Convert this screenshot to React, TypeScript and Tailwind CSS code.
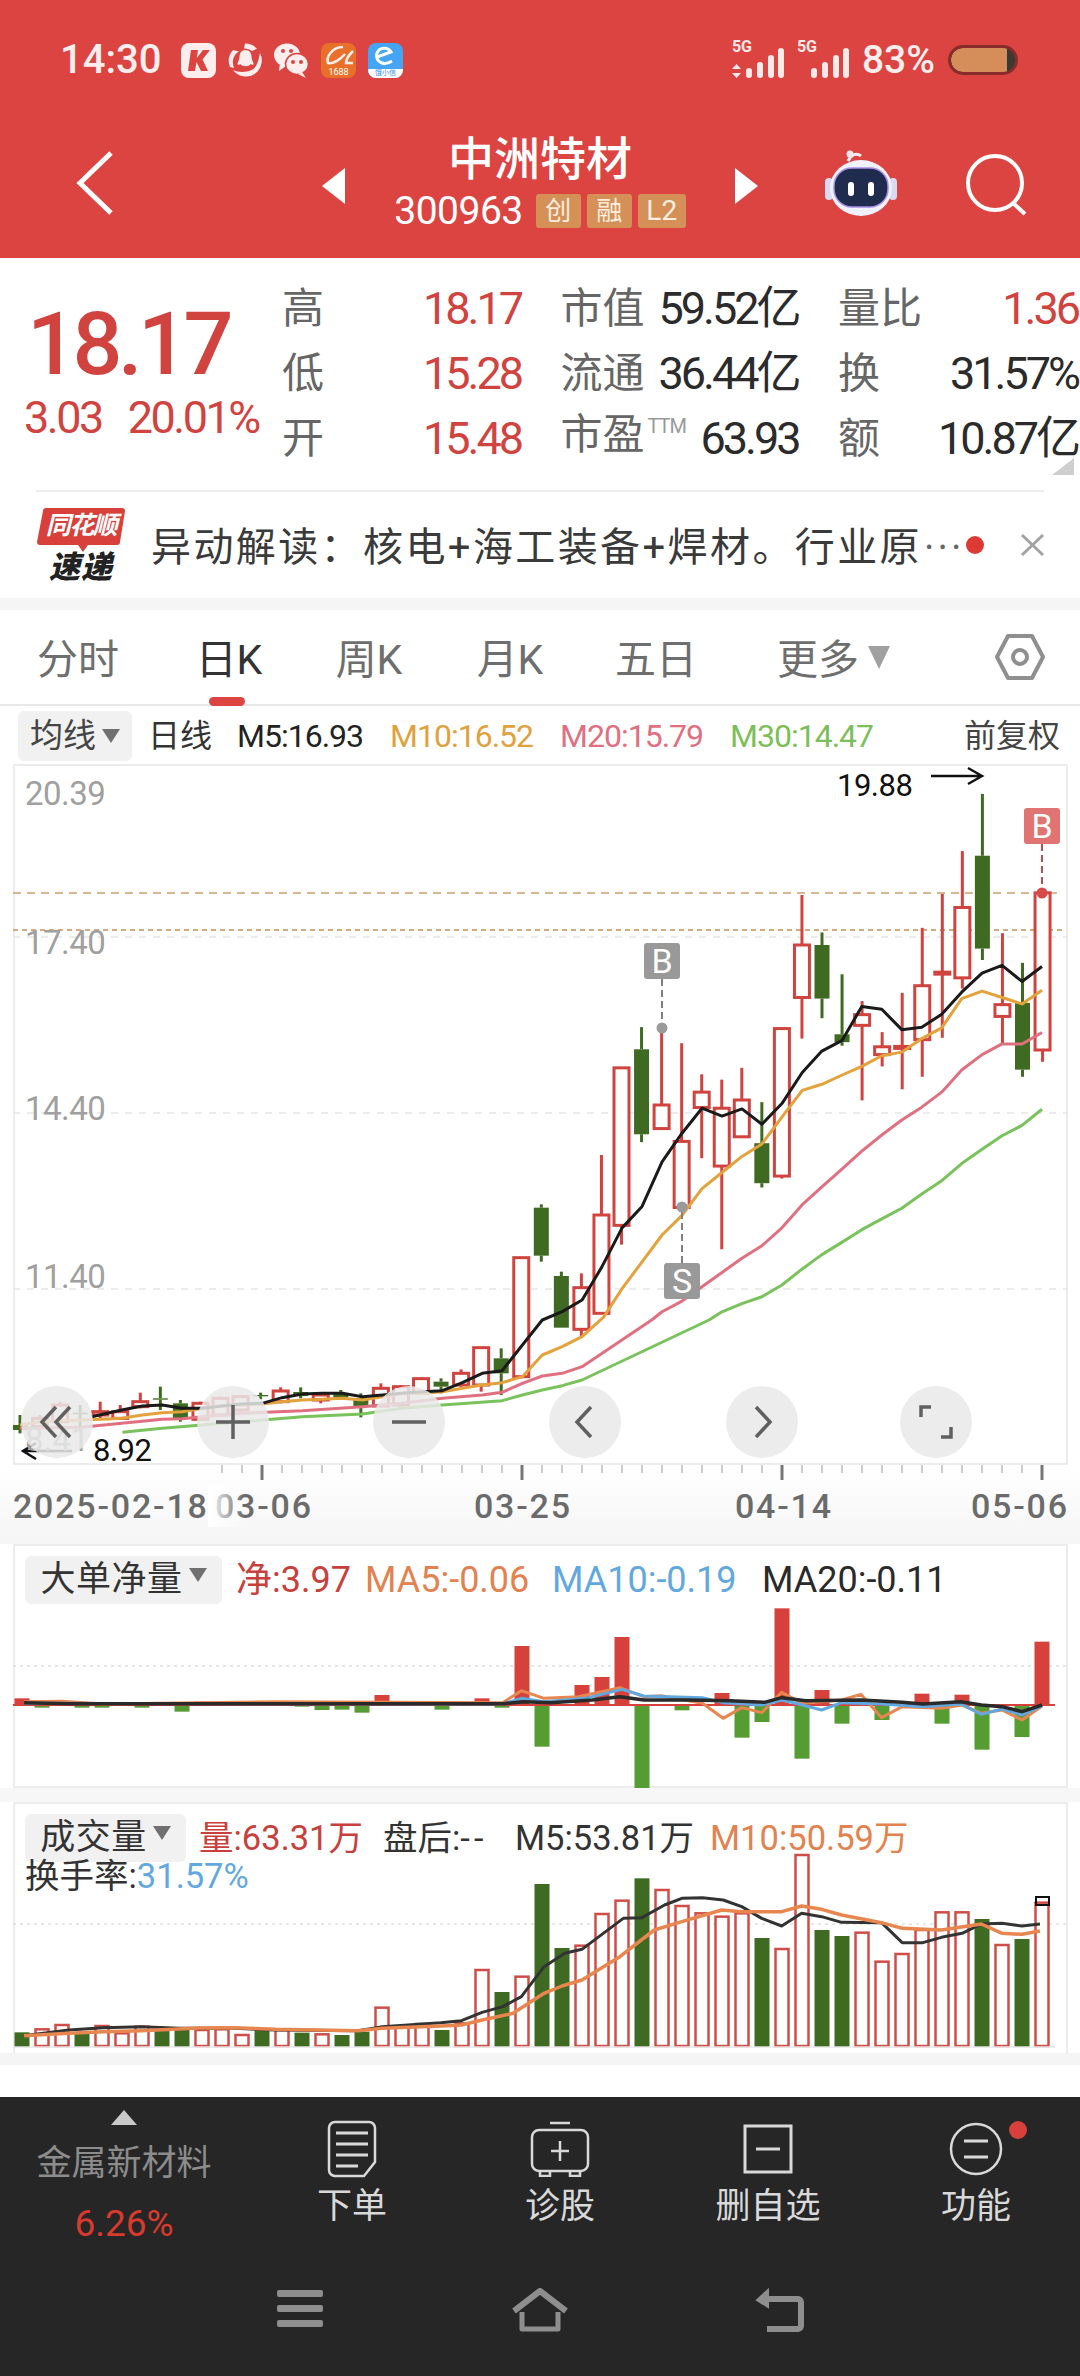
import React from "react";

const RED = "#d0433f";
const GREEN = "#3f6a22";
const z4y = (y: number) => 1100 + y / 3;
const z3y = (y: number) => 760 + y / 2.8;
const z4x = (x: number) => x / 2.613;
const z3x = (x: number) => 500 + x / 2.703;
type C = [number, number, number, number, "r" | "g"];
const c4: C[] = [
  [975, 990, 945, 1000, "g"], [955, 980, 945, 985, "r"], [915, 965, 905, 970, "r"], [938, 943, 915, 985, "g"],
  [935, 945, 905, 960, "r"], [935, 955, 915, 960, "r"], [905, 920, 878, 925, "r"], [895, 899, 860, 930, "g"],
  [910, 955, 900, 965, "g"], [910, 958, 905, 962, "r"], [895, 945, 890, 950, "r"], [890, 930, 885, 935, "r"],
  [885, 889, 878, 898, "g"], [873, 905, 862, 910, "r"], [876, 888, 862, 895, "g"], [885, 900, 880, 910, "r"],
  [880, 893, 870, 897, "g"], [895, 918, 880, 952, "g"], [865, 918, 850, 922, "r"], [860, 915, 855, 920, "r"],
  [836, 880, 832, 884, "r"], [845, 860, 835, 880, "g"], [820, 855, 808, 860, "r"], [743, 855, 743, 875, "r"],
  [775, 820, 745, 885, "g"], [473, 830, 473, 835, "r"], [323, 467, 313, 485, "g"], [528, 683, 515, 683, "g"],
  [563, 688, 520, 712, "r"], [345, 640, 165, 640, "r"],
];
const c3: C[] = [
  [862, 1303, 862, 1357, "r"], [810, 1048, 748, 1070, "g"], [966, 1032, 750, 1032, "r"], [1068, 1253, 793, 1253, "r"],
  [930, 973, 880, 1115, "r"], [975, 1137, 895, 1370, "r"], [952, 1055, 862, 1055, "r"], [1073, 1185, 958, 1197, "g"],
  [752, 1165, 752, 1172, "r"], [518, 665, 378, 780, "r"], [518, 668, 483, 723, "g"], [768, 790, 600, 800, "g"],
  [713, 743, 675, 953, "r"], [803, 825, 762, 858, "r"], [802, 806, 652, 922, "r"], [632, 783, 470, 887, "r"],
  [594, 597, 375, 778, "r"], [413, 610, 255, 640, "r"], [268, 528, 95, 560, "g"], [685, 718, 485, 795, "r"],
  [680, 867, 568, 887, "g"], [372, 812, 360, 845, "r"],
];
const candles = [
  ...c4.map(([a, b, c, d, k]) => [z4y(a), z4y(b), z4y(c), z4y(d), k] as const),
  ...c3.map(([a, b, c, d, k]) => [z3y(a), z3y(b), z3y(c), z3y(d), k] as const),
];
const pts = (a: number[][], b: number[][]) =>
  [...a.map(([x, y]) => `${z4x(x)},${z4y(y)}`), ...b.map(([x, y]) => `${z3x(x)},${z3y(y)}`)].join(" ");
const m5 = pts(
  [[240, 950], [318, 930], [372, 918], [424, 915], [476, 925], [528, 925], [580, 918], [632, 912], [685, 910], [737, 893], [790, 882], [842, 880], [895, 880], [947, 890], [999, 885], [1051, 880], [1103, 875], [1156, 872], [1208, 848], [1260, 820], [1312, 812], [1365, 735], [1417, 660], [1469, 635], [1521, 600]],
  [[275, 1420], [330, 1310], [384, 1250], [438, 1125], [492, 1045], [546, 975], [600, 997], [654, 977], [708, 1020], [762, 962], [817, 875], [870, 815], [925, 785], [978, 690], [1032, 698], [1086, 755], [1140, 748], [1194, 712], [1248, 650], [1303, 597], [1357, 575], [1411, 620], [1465, 578]]
);
const m10 = pts(
  [[52, 975], [104, 965], [213, 960], [265, 958], [318, 955], [372, 945], [424, 938], [476, 935], [528, 925], [580, 918], [632, 915], [685, 912], [737, 905], [790, 900], [842, 898], [895, 895], [947, 900], [999, 890], [1051, 880], [1103, 880], [1156, 875], [1208, 865], [1260, 855], [1312, 848], [1365, 830], [1417, 765], [1469, 740], [1521, 710]],
  [[280, 1560], [330, 1480], [384, 1405], [438, 1330], [492, 1275], [546, 1200], [600, 1155], [654, 1110], [708, 1075], [762, 1000], [817, 925], [870, 908], [925, 882], [978, 858], [1032, 828], [1086, 818], [1140, 780], [1194, 750], [1248, 668], [1303, 647], [1357, 665], [1411, 683], [1465, 645]]
);
const m20 = pts(
  [[52, 985], [213, 982], [318, 970], [424, 958], [476, 956], [528, 950], [632, 940], [790, 932], [947, 920], [1051, 910], [1156, 895], [1260, 885], [1312, 877], [1365, 850], [1417, 828], [1469, 820], [1521, 800]],
  [[410, 1568], [438, 1545], [492, 1515], [546, 1475], [600, 1435], [654, 1395], [708, 1360], [762, 1310], [817, 1245], [870, 1195], [925, 1145], [978, 1095], [1032, 1050], [1086, 1008], [1140, 972], [1194, 930], [1248, 868], [1303, 825], [1357, 795], [1411, 795], [1465, 763]]
);
const m30 = pts(
  [[320, 997], [424, 985], [528, 975], [632, 965], [790, 950], [947, 942], [1051, 925], [1156, 915], [1312, 902], [1365, 885], [1417, 870], [1469, 857], [1521, 840]],
  [[565, 1568], [600, 1545], [654, 1522], [708, 1503], [762, 1470], [817, 1425], [870, 1385], [925, 1350], [978, 1315], [1032, 1285], [1086, 1255], [1140, 1215], [1194, 1178], [1248, 1130], [1303, 1090], [1357, 1052], [1411, 1023], [1465, 978]]
);

const netBars: [number, number][] = [[0, 505], [1, 533], [3, 533], [4, 533], [6, 533], [8, 545], [9, 515], [14, 530], [15, 540], [16, 539], [17, 548], [18, 495], [21, 539], [23, 505], [24, 533], [25, 348], [26, 650], [28, 465], [29, 441], [30, 321], [31, 775], [33, 541], [35, 489], [36, 623], [37, 576], [38, 235], [39, 686], [40, 480], [41, 581], [43, 570], [45, 491], [46, 581], [47, 494], [48, 659], [50, 621], [51, 335]];
const p5 = (a: number[][]) => a.map(([x, y]) => `${x / 1.452},${1530 + y / 3}`).join(" ");
const p6 = (a: number[][]) => a.map(([x, y]) => `${x / 1.452},${1800 + y / 3}`).join(" ");
const netBlack = p5([[35, 518], [100, 521], [730, 521], [760, 515], [800, 518], [860, 510], [900, 500], [935, 510], [1000, 510], [1060, 512], [1110, 517], [1135, 503], [1170, 512], [1250, 510], [1310, 517], [1340, 522], [1395, 515], [1425, 525], [1455, 530], [1484, 545], [1513, 525]]);
const netOrange = p5([[35, 515], [90, 514], [150, 522], [400, 515], [730, 518], [757, 482], [790, 505], [840, 500], [900, 473], [935, 500], [960, 497], [1020, 520], [1050, 565], [1077, 533], [1106, 548], [1135, 487], [1165, 520], [1222, 510], [1250, 493], [1280, 563], [1310, 530], [1367, 535], [1397, 525], [1425, 550], [1455, 540], [1484, 570], [1513, 528]]);
const netBlue = p5([[35, 520], [730, 522], [757, 505], [790, 515], [850, 505], [903, 478], [935, 498], [1020, 503], [1050, 518], [1106, 525], [1135, 510], [1165, 525], [1193, 540], [1222, 518], [1280, 522], [1340, 530], [1395, 522], [1425, 553], [1455, 537], [1484, 555], [1513, 528]]);

const vols: [number, "r" | "g"][] = [[697, "g"], [688, "r"], [675, "r"], [700, "g"], [678, "r"], [700, "r"], [680, "r"], [690, "g"], [688, "g"], [690, "r"], [688, "r"], [705, "r"], [690, "g"], [690, "r"], [698, "g"], [703, "r"], [705, "g"], [695, "g"], [623, "r"], [680, "r"], [672, "r"], [690, "g"], [670, "r"], [510, "r"], [576, "g"], [530, "r"], [252, "g"], [444, "g"], [437, "r"], [342, "r"], [302, "r"], [235, "g"], [270, "r"], [318, "r"], [340, "r"], [350, "r"], [340, "r"], [414, "g"], [447, "r"], [165, "r"], [390, "g"], [408, "g"], [398, "r"], [485, "r"], [462, "r"], [390, "r"], [337, "r"], [337, "r"], [357, "g"], [435, "r"], [417, "g"], [308, "r"]];
const volBlack = p6([[35, 707], [100, 690], [150, 683], [205, 680], [260, 685], [340, 685], [400, 690], [520, 692], [555, 680], [640, 668], [670, 662], [700, 637], [730, 620], [757, 590], [790, 500], [820, 460], [845, 448], [905, 355], [932, 353], [965, 315], [990, 295], [1020, 293], [1050, 300], [1077, 320], [1106, 355], [1135, 378], [1164, 340], [1193, 350], [1222, 367], [1280, 368], [1310, 428], [1340, 428], [1367, 412], [1397, 400], [1425, 372], [1455, 370], [1484, 378], [1510, 372]]);
const volOrange = p6([[35, 707], [100, 700], [150, 695], [205, 692], [290, 684], [340, 683], [400, 688], [520, 692], [555, 685], [640, 678], [670, 675], [700, 660], [745, 640], [790, 580], [816, 558], [845, 540], [900, 470], [950, 390], [990, 365], [1048, 330], [1077, 335], [1135, 335], [1164, 318], [1193, 328], [1222, 345], [1280, 368], [1310, 385], [1367, 390], [1425, 372], [1455, 400], [1484, 403], [1510, 393]]);

const ticks = Array.from({ length: 42 }, (_, i) => 222 + i * 20);

function Signal({ arrows }: { arrows?: boolean }) {
  return (
    <div className="relative h-[36px] w-[54px]">
      <span className="absolute left-0 top-[-3px] text-[16px] font-bold leading-[16px] text-[#fde9e8]">5G</span>
      {arrows && (
        <svg className="absolute left-0 top-[22px]" width="9" height="14" viewBox="0 0 9 14"><path d="M4.5 0 9 5H0ZM4.5 14 0 9h9Z" fill="#fde9e8" /></svg>
      )}
      {[[14, 10], [25, 16], [36, 23], [46, 30]].map(([x, h]) => (
        <span key={x} className="absolute bottom-0 w-[6px] rounded-full bg-[#fde9e8]" style={{ left: x, height: h }} />
      ))}
    </div>
  );
}

function Dropdown({ label, w }: { label: string; w: string }) {
  return (
    <div className={`flex h-[48px] items-center justify-center gap-[6px] rounded-[6px] bg-[#f1f1f1] text-[35px] tracking-[0.5px] text-[#333] ${w}`}>
      <span>{label}</span>
      <svg width="18" height="14" viewBox="0 0 18 14" className="mt-[-10px]"><path d="M0 0h18L9 14Z" fill="#707070" /></svg>
    </div>
  );
}

function Stat({ label, value, color, sup }: { label: string; value: string; color?: string; sup?: boolean }) {
  return (
    <div className="flex h-[65px] items-center justify-between">
      <span className="text-[42px] leading-[50px] text-[#666] whitespace-nowrap">
        {label}
        {sup && <span className="relative top-[-16px] ml-[3px] text-[20px] tracking-[-1px] text-[#999]">TTM</span>}
      </span>
      <span className="text-[45px] leading-[50px] tracking-[-3px] whitespace-nowrap" style={{ color: color ?? "#2b2b2b" }}>{value}</span>
    </div>
  );
}

function Round({ x, children }: { x: number; children: React.ReactNode }) {
  return (
    <div className="absolute top-[620px] flex h-[72px] w-[72px] items-center justify-center rounded-full bg-[#e9e9e9]/85" style={{ left: x - 36 - 15 }}>
      <svg width="50" height="50" viewBox="0 0 50 50" fill="none" stroke="#606060" strokeWidth="3.5">{children}</svg>
    </div>
  );
}

function Pin({ left, top, bg, t }: { left: number; top: number; bg: string; t: string }) {
  return (
    <div className="absolute flex h-[36px] w-[36px] items-center justify-center rounded-[3px] text-[34px] leading-none text-white" style={{ left: left - 15, top: top - 766, background: bg }}>{t}</div>
  );
}

function TabItem({ t, w, active }: { t: string; w: string; active?: boolean }) {
  return <div className={`text-center text-[41px] leading-[50px] ${w} ${active ? "text-[#333]" : "text-[#6e6e6e]"}`}>{t}</div>;
}

function BottomTab({ label, children }: { label: string; children: React.ReactNode }) {
  return (
    <div className="flex w-[208px] flex-col items-center">
      <div className="flex h-[62px] items-center justify-center">{children}</div>
      <div className="mt-[7px] text-[35px] leading-[40px] text-[#d9d9d9]">{label}</div>
    </div>
  );
}

export default function App() {
  return (
    <div className="relative h-[2376px] w-[1080px] overflow-hidden bg-white [font-family:Roboto,'Noto_Sans_CJK_SC',sans-serif]">
      {/* header */}
      <header className="h-[258px] bg-[#dc4442] text-white">
        <div className="flex h-[120px] items-start justify-between pl-[60px] pr-[62px] pt-[42px]">
          <div className="flex items-center">
            <span className="w-[121px] text-[40px] font-medium leading-[36px] text-[#fdeeee]">14:30</span>
            <svg width="35" height="35" viewBox="0 0 35 35">
              <rect width="35" height="35" rx="8" fill="#fdeeee" />
              <path d="M10 7h7l-1.2 8L22 7h7l-7.5 9.5L27 28h-7l-4.5-9L14 28H7Z" fill="#dc4442" />
            </svg>
            <svg className="ml-[12px]" width="35" height="36" viewBox="0 0 35 36">
              <path d="M17 1.5a16.5 16.5 0 0 1 12 5.2L24 9a10 10 0 0 0-8-2.5Z" fill="#fdeeee" />
              <path d="M5 8A16.5 16.5 0 0 0 2 25l4 1C3.500 20 5 13 11 9.500Z" fill="#fdeeee" />
              <path d="M32 11a16.500 16.500 0 0 1-2 18C24 36 12 37 5 28c6 3 19 3 23-4 2-4 3-8 4-13Z" fill="#fdeeee" />
              <path d="M17.500 8c-4 0-6 3-6 7 0 3-2 5-2 7 0 1 2 1 3 0 1 3 9 3 10 0 1 1 3 1 3 0 0-2-2-4-2-7 0-4-2-7-6-7Z" fill="#fdeeee" />
            </svg>
            <svg className="ml-[11px]" width="35" height="36" viewBox="0 0 35 36">
              <ellipse cx="13" cy="13" rx="13" ry="11.5" fill="#fdeeee" />
              <path d="M6 21 5 29l7-5Z" fill="#fdeeee" />
              <ellipse cx="23" cy="22" rx="11.500" ry="10.500" fill="#fdeeee" stroke="#dc4442" strokeWidth="1.500" />
              <path d="M28 30l4 6-8-4Z" fill="#fdeeee" />
              <circle cx="9" cy="9" r="2" fill="#dc4442" /><circle cx="17" cy="9" r="2" fill="#dc4442" />
              <circle cx="19" cy="20" r="2" fill="#dc4442" /><circle cx="27" cy="20" r="2" fill="#dc4442" />
            </svg>
            <div className="relative ml-[12px] h-[35px] w-[35px] overflow-hidden rounded-[8px] bg-[#e8702a]">
              <svg className="absolute left-0 top-0" width="35" height="24" viewBox="0 0 35 24" fill="none" stroke="#fdeeee" strokeWidth="2.500">
                <path d="M22 4C11 4 5 14 7 20c5 1 12-3 17-9" /><path d="M32 8c-4 4-7 8-7 12h7" />
              </svg>
              <span className="absolute bottom-0 left-0 w-full text-center text-[9px] leading-[11px] text-white">1688</span>
            </div>
            <div className="relative ml-[12px] h-[35px] w-[35px] rounded-[8px] bg-[#45a5f2]">
              <svg className="absolute left-0 top-0" width="35" height="26" viewBox="0 0 35 26" fill="none" stroke="#fff" strokeWidth="3">
                <path d="M9 14l14-5c-2-4-8-5-12-2-4 4-3 11 3 13 3 1 7 0 10-2" />
              </svg>
              <span className="absolute bottom-0 left-0 w-full rounded-b-[8px] bg-white text-center text-[7px] leading-[9px] text-[#3a8fdc]">饿小信</span>
            </div>
          </div>
          <div className="flex items-center">
            <Signal arrows />
            <div className="ml-[11px]"><Signal /></div>
            <span className="ml-[11px] text-[39px] font-medium leading-[36px] text-[#fdeeee]">83%</span>
            <div className="ml-[13px] flex h-[30px] w-[70px] items-center overflow-hidden rounded-[15px] border-[3px] border-[#8a2b2b] bg-[#3a3a32]">
              <div className="h-full w-[56px] rounded-l-[12px] bg-[#d58d5a]" />
            </div>
          </div>
        </div>
        <div className="relative flex h-[138px] items-start">
          <svg className="absolute left-[75px] top-[30px]" width="40" height="66" viewBox="0 0 40 66" fill="none" stroke="#fff" strokeWidth="5"><path d="M36 3 5 33l31 30" /></svg>
          <div className="ml-[322px] mt-[48px] w-0 border-y-[18px] border-r-[23px] border-y-transparent border-r-white" />
          <div className="flex w-[390px] flex-col items-center pt-[11px]">
            <div className="text-[46px] font-medium leading-[56px]">中洲特材</div>
            <div className="mt-[6px] flex h-[36px] items-center gap-[6px]">
              <span className="mr-[7px] text-[39px] leading-[36px] tracking-[-0.5px]">300963</span>
              <span className="flex h-[34px] w-[45px] items-center justify-center rounded-[3px] bg-[#d59058] text-[26px] leading-none text-[#fdeee0]">创</span>
              <span className="flex h-[34px] w-[45px] items-center justify-center rounded-[3px] bg-[#d59058] text-[26px] leading-none text-[#fdeee0]">融</span>
              <span className="flex h-[34px] w-[48px] items-center justify-center rounded-[3px] bg-[#d59058] text-[28px] leading-none text-[#fdeee0]">L2</span>
            </div>
          </div>
          <div className="mt-[48px] w-0 border-y-[18px] border-l-[23px] border-y-transparent border-l-white" />
          <svg className="absolute left-[825px] top-[30px]" width="72" height="66" viewBox="0 0 72 66">
            <path d="M25 13c3-6 8-9 13-5" fill="none" stroke="#f1eef8" strokeWidth="3" transform="translate(-2 -2)" />
            <circle cx="25" cy="4" r="3.500" fill="#f6e6ea" />
            <rect x="0" y="28" width="8" height="22" rx="4" fill="#d9dcf0" />
            <rect x="64" y="28" width="8" height="22" rx="4" fill="#d9dcf0" />
            <ellipse cx="36" cy="38" rx="31" ry="28" fill="#f1f1fb" />
            <rect x="9" y="18" width="54" height="39" rx="18" fill="#1f2c4e" stroke="#a58fe6" strokeWidth="1.500" />
            <rect x="23" y="32" width="6" height="14" rx="3" fill="#fff" /><rect x="43" y="32" width="6" height="14" rx="3" fill="#fff" />
          </svg>
          <svg className="absolute left-[965px] top-[33px]" width="62" height="66" viewBox="0 0 62 66" fill="none" stroke="#fff" strokeWidth="4">
            <circle cx="30" cy="30" r="27" /><path d="M48 50l12 11" />
          </svg>
        </div>
      </header>

      {/* stats */}
      <section className="relative flex h-[232px] pt-[18px]">
        <div className="w-[282px]">
          <div className="ml-[27px] mt-[20px] text-[88px] font-medium leading-[96px] tracking-[-4.5px] text-[#d0433f]">18.17</div>
          <div className="flex pl-[24px] text-[45px] leading-[52px] tracking-[-2.5px] text-[#d0433f]">
            <span>3.03</span><span className="ml-[26px]">20.01%</span>
          </div>
        </div>
        <div className="grid h-[195px] w-[796px] grid-cols-[239px_238px_240px] grid-rows-[65px_65px_65px] gap-x-[39.5px]">
          <Stat label="高" value="18.17" color={RED} />
          <Stat label="市值" value="59.52亿" />
          <Stat label="量比" value="1.36" color={RED} />
          <Stat label="低" value="15.28" color={RED} />
          <Stat label="流通" value="36.44亿" />
          <Stat label="换" value="31.57%" />
          <Stat label="开" value="15.48" color={RED} />
          <Stat label="市盈" value="63.93" sup />
          <Stat label="额" value="10.87亿" />
        </div>
        <div className="absolute bottom-[15px] right-[6px] h-0 w-0 border-b-[17px] border-l-[22px] border-b-[#cfcfcf] border-l-transparent" />
      </section>
      <div className="mx-[36px] h-[2px] bg-[#eeeeee]" />

      {/* banner */}
      <section className="flex h-[106px] items-center pl-[37px]">
        <div className="relative h-[74px] w-[88px]">
          <svg className="absolute left-0 top-0" width="88" height="44" viewBox="0 0 88 44">
            <path d="M9 0h76a3 3 0 0 1 3 3l-5 31a3 3 0 0 1-3 3H51l-5 7-5-7H3a3 3 0 0 1-3-3L6 3a3 3 0 0 1 3-3Z" fill="#d8403b" />
          </svg>
          <div className="absolute left-0 top-[3px] w-[88px] text-center text-[25px] font-bold italic leading-[30px] tracking-[-1.5px] text-white">同花顺</div>
          <div className="absolute left-0 top-[43px] w-[88px] text-center text-[31px] font-black italic leading-[34px] tracking-[1px] text-[#222]">速递</div>
        </div>
        <div className="ml-[26px] mt-[5px] flex w-[807px] items-center whitespace-nowrap text-[40px] leading-[50px] tracking-[2.4px] text-[#3a3a3a]">
          <span>异动解读：核电+海工装备+焊材。行业原</span>
          <span className="ml-[2px] tracking-[3px] text-[#666]">···</span>
        </div>
        <span className="ml-[8px] h-[18px] w-[18px] rounded-full bg-[#dd3a34]" />
        <svg className="ml-[36px]" width="25" height="24" viewBox="0 0 25 24" stroke="#a3a3a3" strokeWidth="3"><path d="M2 2l21 20M23 2 2 22" /></svg>
      </section>
      <div className="h-[12px] bg-[#f5f5f5]" />

      {/* tabs */}
      <nav className="relative flex h-[96px] items-center border-b-2 border-[#e8e8e8] pt-[5px]">
        <TabItem t="分时" w="w-[156px]" />
        <TabItem t="日K" w="w-[146px]" active />
        <TabItem t="周K" w="w-[134px]" />
        <TabItem t="月K" w="w-[148px]" />
        <TabItem t="五日" w="w-[144px]" />
        <div className="ml-[49px] flex items-center text-[41px] leading-[50px] text-[#6e6e6e]">
          <span>更多</span>
          <svg className="ml-[9px] mt-[-5px]" width="22" height="23" viewBox="0 0 22 23"><path d="M0 0h22L11 23Z" fill="#a0a0a0" /></svg>
        </div>
        <svg className="ml-[105px] mt-[-5px]" width="50" height="48" viewBox="0 0 50 48" fill="none" stroke="#8f8f8f" strokeWidth="4">
          <path d="M13 3h24l11 21-11 21H13L2 24Z" strokeLinejoin="round" /><circle cx="25" cy="24" r="7" />
        </svg>
        <div className="absolute left-[209px] top-[87px] h-[9px] w-[36px] rounded-full bg-[#dc4442]" />
      </nav>

      {/* indicator row */}
      <section className="flex h-[58px] items-center whitespace-nowrap pt-[2px] text-[32px] leading-[40px]">
        <div className="ml-[18px] flex h-[50px] w-[114px] items-center justify-center gap-[6px] rounded-[6px] bg-[#f1f1f1] text-[#444]">
          <span className="text-[33px]">均线</span>
          <svg width="18" height="14" viewBox="0 0 18 14"><path d="M0 0h18L9 14Z" fill="#707070" /></svg>
        </div>
        <span className="ml-[16px] w-[89px] text-[#333]">日线</span>
        <span className="w-[153px] tracking-[-1px] text-[#222]">M5:16.93</span>
        <span className="w-[170px] tracking-[-1px] text-[#e0a23f]">M10:16.52</span>
        <span className="w-[170px] tracking-[-1px] text-[#e0707f]">M20:15.79</span>
        <span className="w-[150px] tracking-[-1px] text-[#7cbf5a]">M30:14.47</span>
        <span className="ml-auto mr-[20px] text-[#444]">前复权</span>
      </section>

      {/* main chart */}
      <section className="relative ml-[13px] h-[701px] w-[1055px] border-2 border-[#ececec]">
        <svg className="absolute left-[-2px] top-[-2px]" width="1055" height="701" viewBox="13 764 1055 701" fill="none">
          {[937, 1113, 1289].map((y) => (
            <line key={y} x1="13" x2="1068" y1={y} y2={y} stroke="#e6e6e6" strokeWidth="1.500" strokeDasharray="7 7" />
          ))}
          <line x1="13" x2="1062" y1="893" y2="893" stroke="#c9a06e" strokeWidth="1.500" strokeDasharray="8 6" />
          <line x1="13" x2="1062" y1="930" y2="930" stroke="#c98f55" strokeWidth="1.500" strokeDasharray="5 4" />
          {candles.map(([t, b, wt, wb, k], i) => {
            const x = 20 + i * 20.05;
            const col = k === "r" ? RED : GREEN;
            return (
              <g key={i}>
                <line x1={x} x2={x} y1={wt} y2={t} stroke={col} strokeWidth="3" />
                <line x1={x} x2={x} y1={b} y2={wb} stroke={col} strokeWidth="3" />
                {k === "r" ? (
                  <rect x={x - 7.5} y={t} width="15" height={Math.max(b - t, 2)} fill="#fff" stroke={col} strokeWidth="3" />
                ) : (
                  <rect x={x - 7.5} y={t} width="15" height={b - t} fill={col} />
                )}
              </g>
            );
          })}
          <polyline points={m30} stroke="#79c25c" strokeWidth="3" strokeLinejoin="round" />
          <polyline points={m20} stroke="#e07080" strokeWidth="3" strokeLinejoin="round" />
          <polyline points={m10} stroke="#e3a23c" strokeWidth="3" strokeLinejoin="round" />
          <polyline points={m5} stroke="#1a1a1a" strokeWidth="3" strokeLinejoin="round" />
          <path d="M662 979V1028" stroke="#808080" strokeWidth="2" strokeDasharray="7 4" />
          <circle cx="662" cy="1028" r="5.500" fill="#9a9a9a" />
          <path d="M682 1263V1206" stroke="#808080" strokeWidth="2" strokeDasharray="7 4" />
          <circle cx="682" cy="1207" r="5.500" fill="#9a9a9a" />
          <path d="M1042 844V893" stroke="#b05050" strokeWidth="2" strokeDasharray="7 4" />
          <circle cx="1042" cy="893" r="5.500" fill="#d64a4a" />
          <path d="M931 776h51M968 768l14 8-14 8" stroke="#111" strokeWidth="2.500" />
          <path d="M72 1451H24M36 1443l-13 8 13 8" stroke="#111" strokeWidth="2.500" />
        </svg>
        <span className="absolute left-[10px] top-[12px] text-[33px] leading-[32px] tracking-[-0.5px] text-[#a0a0a0]">20.39</span>
        <span className="absolute left-[10px] top-[161px] text-[33px] leading-[32px] tracking-[-0.5px] text-[#a0a0a0]">17.40</span>
        <span className="absolute left-[10px] top-[327px] text-[33px] leading-[32px] tracking-[-0.5px] text-[#a0a0a0]">14.40</span>
        <span className="absolute left-[10px] top-[495px] text-[33px] leading-[32px] tracking-[-0.5px] text-[#a0a0a0]">11.40</span>
        <span className="absolute left-[10px] top-[658px] text-[33px] leading-[32px] text-[#a0a0a0]">8.41</span>
        <span className="absolute left-[822px] top-[5px] text-[31px] leading-[30px] tracking-[-0.5px] text-[#111]">19.88</span>
        <span className="absolute left-[78px] top-[670px] text-[31px] leading-[30px] tracking-[-0.5px] text-[#111]">8.92</span>
        <Pin left={1024} top={808} bg="#e07472" t="B" />
        <Pin left={644} top={943} bg="#999999" t="B" />
        <Pin left={664} top={1263} bg="#999999" t="S" />
        <Round x={57}><path d="M24 10 10 25l14 15M38 10 24 25l14 15" /></Round>
        <Round x={233}><path d="M25 8v34M8 25h34" /></Round>
        <Round x={409}><path d="M8 25h34" /></Round>
        <Round x={585}><path d="M31 10 17 25l14 15" /></Round>
        <Round x={762}><path d="M19 10l14 15-14 15" /></Round>
        <Round x={936}><path d="M10 20V10h10M40 30v10H30" /></Round>
      </section>

      {/* date axis */}
      <section className="relative h-[79px] bg-gradient-to-b from-white to-[#f5f5f5]">
        <svg className="absolute left-0 top-0" width="1080" height="18" viewBox="0 0 1080 18">
          {ticks.map((x) => {
            const major = x === 262 || x === 522 || x === 782 || x === 1042;
            return <line key={x} x1={x} x2={x} y1="0" y2={major ? 15 : 8} stroke={major ? "#777" : "#bbb"} strokeWidth={major ? 3 : 1.500} />;
          })}
        </svg>
        <div className="flex pt-[24px] text-[34px] font-medium leading-[34px] tracking-[1.8px] text-[#6b6b6b]">
          <span className="ml-[13px] w-[202px]">2025-02-18</span>
          <span className="w-[259px]">03-06</span>
          <span className="w-[261px]">03-25</span>
          <span className="w-[236px]">04-14</span>
          <span>05-06</span>
        </div>
        <div className="absolute left-[208px] top-[20px] h-[42px] w-[36px] bg-gradient-to-r from-white to-transparent" />
      </section>

      {/* net panel */}
      <section className="relative ml-[13px] h-[244px] w-[1055px] border-2 border-[#ececec] bg-white">
        <svg className="absolute left-[-2px] top-[-2px]" width="1055" height="244" viewBox="13 1544 1055 244" fill="none">
          <line x1="13" x2="1068" y1="1666" y2="1666" stroke="#e0e0e0" strokeWidth="1.500" strokeDasharray="3 4" />
          {netBars.map(([i, top]) => {
            const x = 22 + i * 20;
            const y = 1530 + top / 3;
            const base = 1705;
            return <rect key={i} x={x - 7.5} y={Math.min(y, base)} width="15" height={Math.abs(base - y)} fill={y < base ? "#d6423b" : "#559c33"} />;
          })}
          <line x1="13" x2="1055" y1="1705" y2="1705" stroke="#d6423b" strokeWidth="2" />
          <polyline points={netOrange} stroke="#e8864f" strokeWidth="3" strokeLinejoin="round" />
          <polyline points={netBlue} stroke="#62a8e0" strokeWidth="3" strokeLinejoin="round" />
          <polyline points={netBlack} stroke="#2a2a2a" strokeWidth="3.500" strokeLinejoin="round" />
        </svg>
        <div className="relative flex items-center whitespace-nowrap pl-[10px] pt-[10px] text-[36px] leading-[48px]">
          <Dropdown label="大单净量" w="w-[197px]" />
          <span className="ml-[14px] w-[129px] text-[#c8403c]">净:3.97</span>
          <span className="w-[187px] text-[#e2824e]">MA5:-0.06</span>
          <span className="w-[210px] text-[#62a8e0]">MA10:-0.19</span>
          <span className="text-[#2a2a2a]">MA20:-0.11</span>
        </div>
      </section>
      <div className="h-[14px] bg-[#f7f7f7]" />

      {/* volume panel */}
      <section className="relative ml-[13px] h-[251px] w-[1055px] border-x-2 border-t-2 border-[#ececec] bg-white">
        <svg className="absolute left-[-2px] top-[-2px]" width="1055" height="251" viewBox="13 1802 1055 251" fill="none">
          <line x1="13" x2="1068" y1="1924" y2="1924" stroke="#e0e0e0" strokeWidth="1.500" strokeDasharray="3 4" />
          {vols.map(([top, k], i) => {
            const x = 22 + i * 20;
            const y = 1800 + top / 3;
            return k === "g" ? (
              <rect key={i} x={x - 7.5} y={y} width="15" height={2047 - y} fill={GREEN} />
            ) : (
              <rect key={i} x={x - 6.5} y={y} width="13" height={2046 - y} fill="#fff" stroke="#cf4d48" strokeWidth="2.500" />
            );
          })}
          <line x1="13" x2="1055" y1="2047" y2="2047" stroke="#e4e4e4" strokeWidth="1.500" />
          <polyline points={volBlack} stroke="#333" strokeWidth="3" strokeLinejoin="round" />
          <polyline points={volOrange} stroke="#e8864f" strokeWidth="3.500" strokeLinejoin="round" />
          <rect x="1036" y="1897" width="13" height="8" stroke="#111" strokeWidth="2" />
        </svg>
        <div className="relative whitespace-nowrap pl-[10px] pt-[10px] text-[34.5px] leading-[48px]">
          <div className="flex items-center">
            <Dropdown label="成交量" w="w-[161px]" />
            <span className="ml-[13px] w-[184px] text-[#c8403c]">量:63.31万</span>
            <span className="w-[132px] text-[#333]">盘后:<span className="tracking-[4px]">--</span></span>
            <span className="w-[195px] text-[#333]">M5:53.81万</span>
            <span className="text-[#e2824e]">M10:50.59万</span>
          </div>
          <div className="-mt-[6px] leading-[40px] text-[#333]">换手率:<span className="text-[#62a8e0]">31.57%</span></div>
        </div>
      </section>
      <div className="h-[12px] bg-[#f5f5f5]" />
      <div className="h-[32px] bg-white" />

      {/* bottom */}
      <footer className="h-[279px] bg-[#262626]">
        <div className="flex h-[185px]">
          <div className="flex w-[248px] flex-col items-center pt-[13px]">
            <div className="h-0 w-0 border-x-[13px] border-b-[15px] border-x-transparent border-b-[#c9c9c9]" />
            <div className="mt-[19px] text-[35px] leading-[40px] text-[#8c8c8c]">金属新材料</div>
            <div className="mt-[20px] text-[37px] leading-[40px] text-[#d83a2e]">6.26%</div>
          </div>
          <div className="flex pt-[21px]">
            <BottomTab label="下单">
              <svg width="50" height="58" viewBox="0 0 50 58" fill="none" stroke="#d9d9d9" strokeWidth="2.500">
                <path d="M8 2h34a6 6 0 0 1 6 6v34L37 56H8a6 6 0 0 1-6-6V8a6 6 0 0 1 6-6Z" />
                <path d="M9 13h32M9 24h32M9 35h32M9 46h22" strokeWidth="3" />
              </svg>
            </BottomTab>
            <BottomTab label="诊股">
              <svg width="60" height="56" viewBox="0 0 60 56" fill="none" stroke="#d9d9d9" strokeWidth="2.500">
                <rect x="2" y="9" width="56" height="41" rx="7" />
                <path d="M20 2h20M30 20v20M21 30h18M10 50v5h10v-5M40 50v5h10v-5" />
              </svg>
            </BottomTab>
            <BottomTab label="删自选">
              <svg width="50" height="50" viewBox="0 0 50 50" fill="none" stroke="#d9d9d9" strokeWidth="3">
                <rect x="2" y="2" width="46" height="46" /><path d="M13 25h24" />
              </svg>
            </BottomTab>
            <div className="relative">
              <BottomTab label="功能">
                <svg width="54" height="54" viewBox="0 0 54 54" fill="none" stroke="#d9d9d9" strokeWidth="2.500">
                  <circle cx="27" cy="27" r="25" /><path d="M15 19h24M15 35h24" strokeWidth="3" />
                </svg>
              </BottomTab>
              <span className="absolute left-[137px] top-[3px] h-[18px] w-[18px] rounded-full bg-[#d8403b]" />
            </div>
          </div>
        </div>
        <div className="flex justify-center pt-[6px]">
          <div className="flex w-[240px] justify-center pt-[2px]">
            <svg width="46" height="38" viewBox="0 0 46 38" fill="#8e8e8e">
              <rect width="46" height="7" rx="2" y="0" /><rect width="46" height="7" rx="2" y="15" /><rect width="46" height="7" rx="2" y="30" />
            </svg>
          </div>
          <div className="flex w-[240px] justify-center">
            <svg width="58" height="44" viewBox="0 0 58 44" fill="none" stroke="#8e8e8e" strokeWidth="6" strokeLinejoin="round">
              <path d="M3 23 29 3l26 20" /><path d="M11 24v17h36V24" strokeWidth="5" />
            </svg>
          </div>
          <div className="flex w-[240px] justify-center">
            <svg width="50" height="44" viewBox="0 0 50 44" fill="none" stroke="#8e8e8e" strokeWidth="6">
              <path d="M10 11h33a4 4 0 0 1 3 3v24a4 4 0 0 1-3 3H12" /><path d="M13 2 2 12l11 7Z" fill="#8e8e8e" strokeWidth="2" />
            </svg>
          </div>
        </div>
      </footer>
    </div>
  );
}
